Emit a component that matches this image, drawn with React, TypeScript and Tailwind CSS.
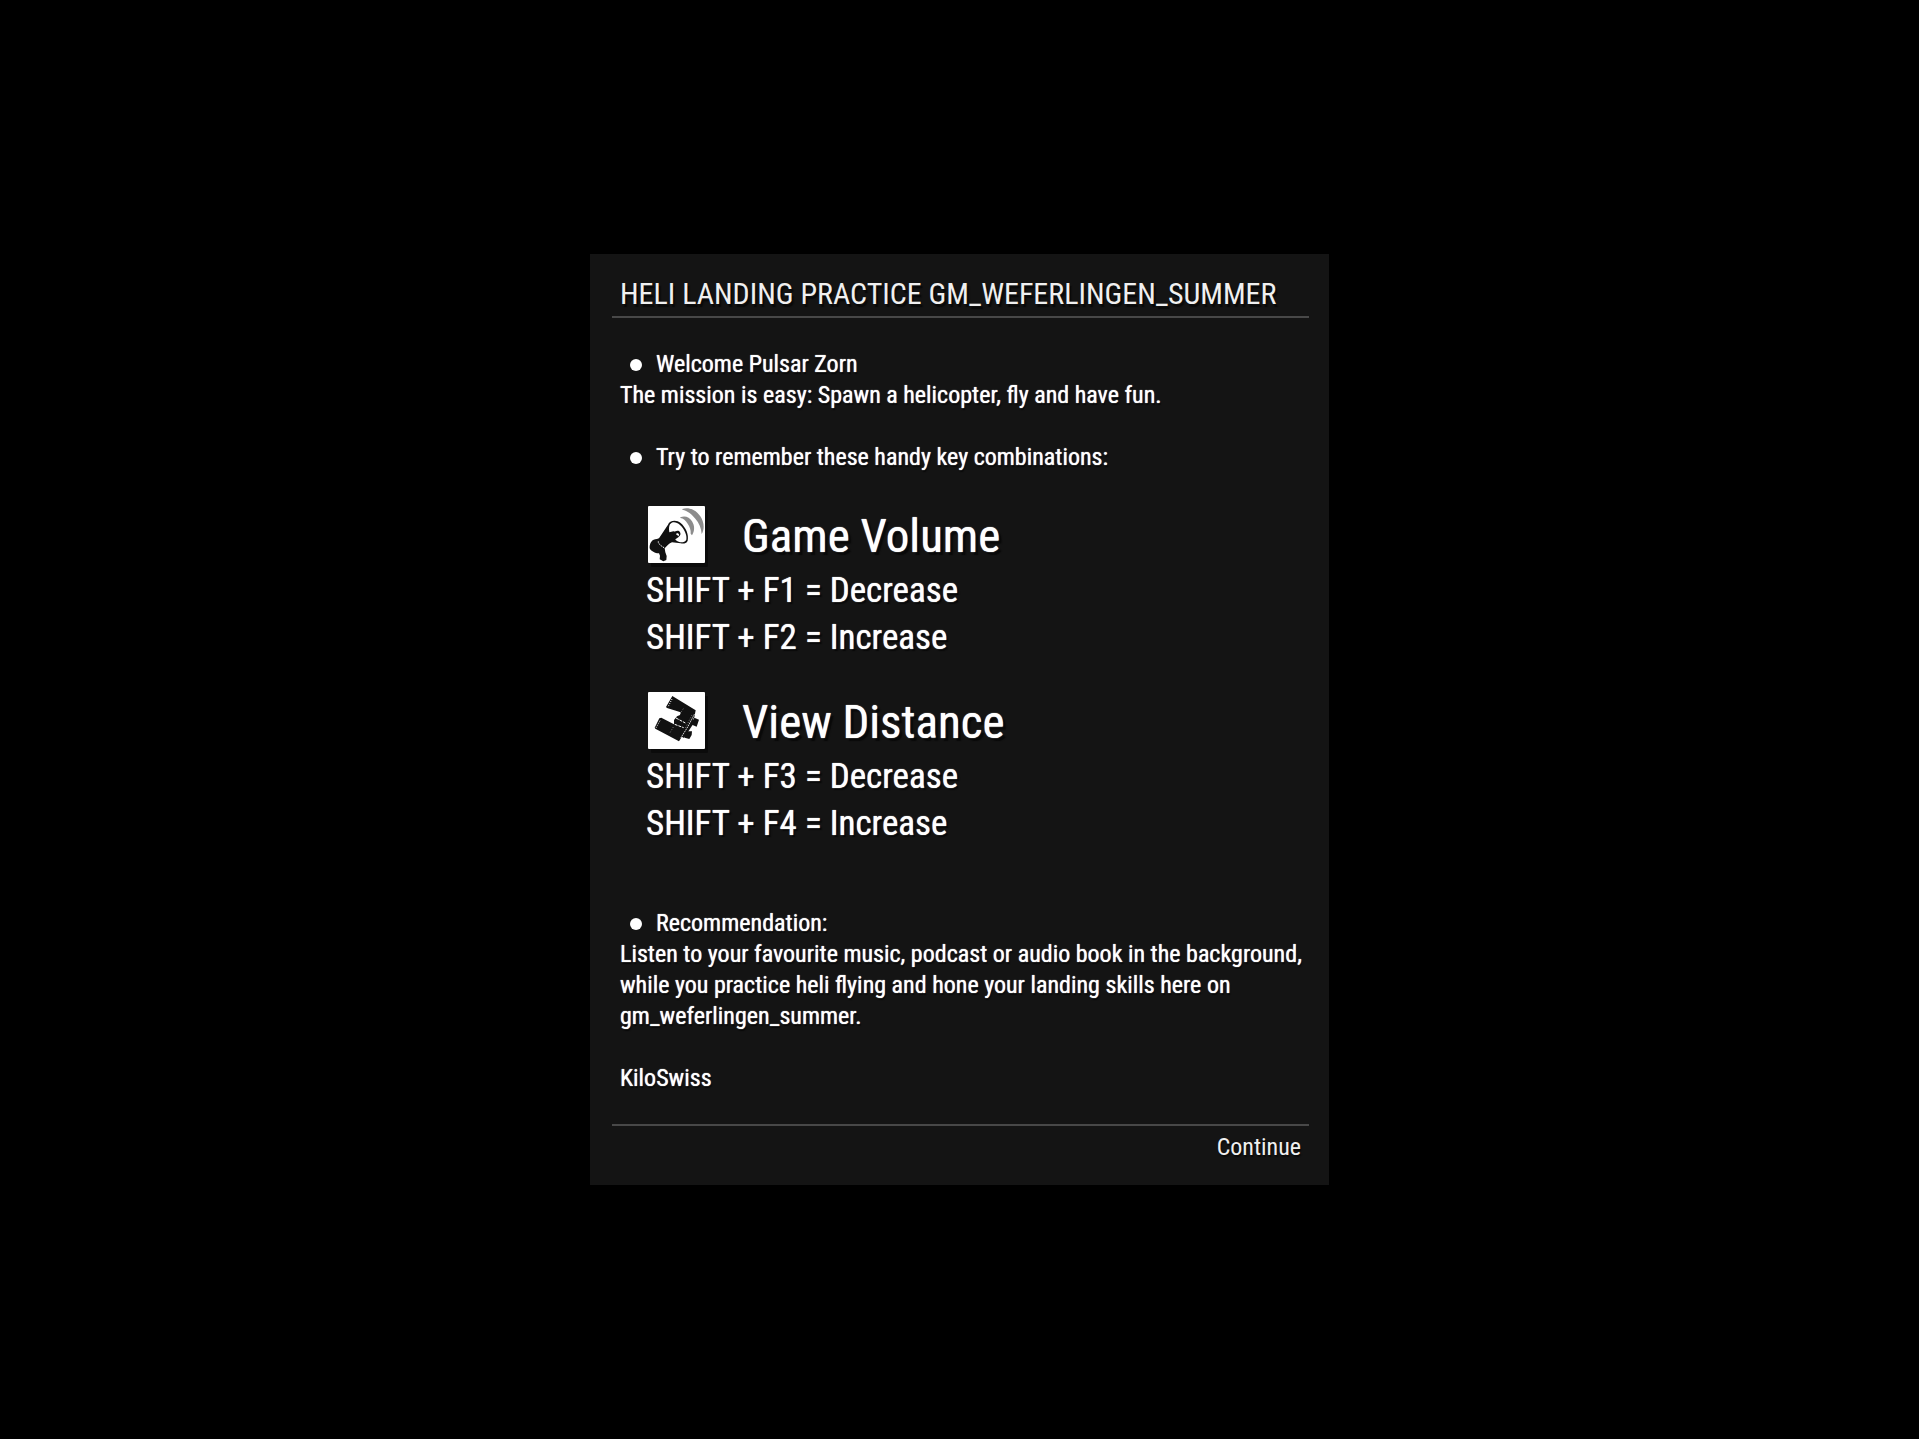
import type { ReactNode } from "react";

function MegaphoneIcon() {
  return (
    <svg viewBox="0 0 171 171" className="size-full" aria-hidden="true">
      <path d="M103 9C120 3 143 10 157 31C169 49 170 69 161 84C160 66 153 50 142 38C132 25 119 14 103 11Z" fill="#8c8c8c" />
      <path d="M97 34C112 28 124 34 132 46C140 59 141 74 132 88L128 83C129 72 125 62 119 53C113 44 106 37 97 36Z" fill="#8c8c8c" />
      <path d="M60 56C64 44 84 40 98 51C114 65 123 86 119 104C115 113 106 114 98 112L72 109C63 112 57 120 50 127L52 139L56 150L55 162L46 166L35 160L36 149L33 142C25 143 8 136 5 127C4 117 8 105 17 101C22 99 32 98 34 95Z" fill="#111" />
      <path d="M66 55C73 45 86 48 96 57C109 69 118 88 115 101C111 109 101 110 94 108C85 105 83 103 82 100C88 96 95 91 97 86C99 80 94 73 88 74C83 75 80 77 76 76L64 79C62 68 63 60 66 55Z" fill="#fff" />
      <path d="M87 81L93 84L92 91L84 85Z" fill="#fff" />
      <path d="M32 112L39 119L51 127" fill="none" stroke="#fff" strokeWidth="3" strokeDasharray="5 3" />
      <circle cx="31" cy="108" r="2" fill="#ddd" />
    </svg>
  );
}

function BinocularsIcon() {
  return (
    <svg viewBox="0 0 171 171" className="size-full" aria-hidden="true">
      <path d="M73 12L143 55L139 76L93 148L22 110L20 107L34 79L40 77L78 97L78 84L87 73L96 69L98 61L57 48L54 45Z" fill="#111" />
      <path d="M139 77L153 83L146 104L132 98ZM116 118L132 118L131 129L124 141L110 137L108 130Z" fill="#111" />
      <path d="M125 74L142 86L108 138L93 130Z" fill="#111" />
      <path d="M72 21L60 45M36 86L24 108" fill="none" stroke="#fff" strokeWidth="3" strokeDasharray="3 4" />
      <path d="M84 78L112 93M80 97L107 107" fill="none" stroke="#fff" strokeWidth="3" strokeDasharray="9 3" />
      <path d="M139 67L119 105L97 140" fill="none" stroke="#fff" strokeWidth="3" strokeDasharray="4 3" />
      <path d="M132 69L112 108M106 50L96 66M76 105L66 122" fill="none" stroke="#aaa" strokeWidth="2" strokeDasharray="3 5" />
    </svg>
  );
}

function Bullet({ children }: { children: ReactNode }) {
  return (
    <div className="flex items-center gap-[14px] pl-[10px]">
      <span className="size-3 rounded-full bg-white" />
      <p>{children}</p>
    </div>
  );
}

function KeyGroup({ icon, title, keys }: { icon: ReactNode; title: string; keys: string[] }) {
  return (
    <section className="pl-[26px]">
      <div className="flex gap-[37px] pl-[2px]">
        <span className="mt-px size-[57px] rounded-[1px] bg-white shadow-[3px_4px_0_#0b0b0b]">{icon}</span>
        <h2 className="text-[47px] leading-[62px] [text-shadow:0_0_1px_#fff,3px_3px_1px_#090909]">{title}</h2>
      </div>
      {keys.map((k) => (
        <p key={k} className="text-[35px] leading-[47px] [text-shadow:0_0_1px_#fff,2px_2px_1px_#090909]">
          {k}
        </p>
      ))}
    </section>
  );
}

export default function App() {
  return (
    <main className="flex min-h-screen items-center justify-center bg-black font-['Roboto_Condensed','Roboto',sans-serif] text-white">
      <div className="w-full max-w-[739px] bg-[#141414] pt-5 pr-5 pb-[22px] pl-[22px]">
        <h1 className="border-b-2 border-[#484848] px-2 pb-[2px] text-[30px] leading-[40px] text-[#f0f0f0] [text-shadow:2px_3px_1px_#090909]">
          HELI LANDING PRACTICE GM_WEFERLINGEN_SUMMER
        </h1>
        <div className="border-b-2 border-[#484848] pt-[31px] pb-[30px] pl-2 text-[24px] leading-[31px] [text-shadow:0_0_1px_#fff,1px_2px_1px_#090909]">
          <Bullet>Welcome Pulsar Zorn</Bullet>
          <p className="mb-[31px]">The mission is easy: Spawn a helicopter, fly and have fun.</p>
          <Bullet>Try to remember these handy key combinations:</Bullet>
          <div className="mt-8 mb-[61px] flex flex-col gap-[30px]">
            <KeyGroup icon={<MegaphoneIcon />} title="Game Volume" keys={["SHIFT + F1 = Decrease", "SHIFT + F2 = Increase"]} />
            <KeyGroup icon={<BinocularsIcon />} title="View Distance" keys={["SHIFT + F3 = Decrease", "SHIFT + F4 = Increase"]} />
          </div>
          <Bullet>Recommendation:</Bullet>
          <p className="mb-[31px]">
            Listen to your favourite music, podcast or audio book in the background, while you practice heli flying and hone
            your landing skills here on gm_weferlingen_summer.
          </p>
          <p>KiloSwiss</p>
        </div>
        <div className="flex justify-end px-2 pt-[6px]">
          <button type="button" className="text-[24px] leading-[31px] text-[#f0f0f0] [text-shadow:1px_2px_1px_#090909]">
            Continue
          </button>
        </div>
      </div>
    </main>
  );
}
